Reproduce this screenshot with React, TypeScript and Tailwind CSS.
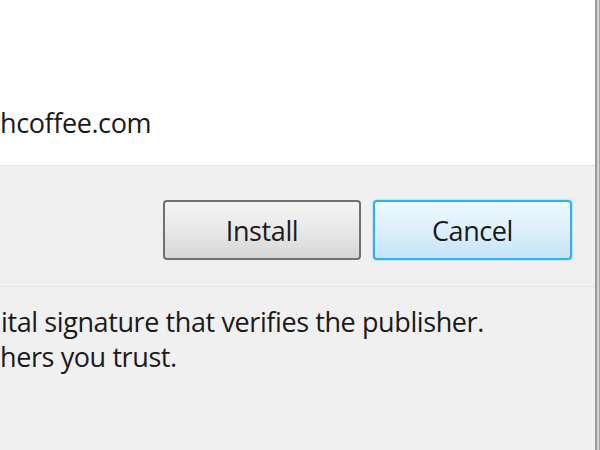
export default function App() {
  const font = { fontFamily: '"Open Sans", "Noto Sans", sans-serif' };

  return (
    <div
      className="w-[600px] h-[450px] flex overflow-hidden bg-[#f0f0f0] text-[#1a1a1a]"
      style={font}
    >
      <div className="flex-1 flex flex-col">
        {/* Details */}
        <div className="h-[165px] bg-white flex items-end pb-[29px]">
          <p className="text-[27px] leading-none tracking-[-0.4px]">hcoffee.com</p>
        </div>

        {/* Buttons */}
        <div className="h-[121px] border-t border-[#e2e2e2] flex items-center justify-end gap-[12px] pr-[23px] pt-[8px]">
          <button className="w-[198px] h-[60px] rounded-[4px] border-2 border-[#707070] bg-gradient-to-b from-[#f4f4f4] via-[#e8e8e8] to-[#d6d6d6] pt-[3px] text-[27px] tracking-[-0.4px]">
            Install
          </button>
          <button className="w-[199px] h-[60px] rounded-[4px] border-2 border-[#2fb2e6] bg-gradient-to-b from-[#eef8fe] via-[#dcf0fb] to-[#c4e4f6] pt-[3px] text-[27px] tracking-[-0.4px] shadow-[0_0_2px_#5cc8f0]">
            Cancel
          </button>
        </div>

        {/* Footer note */}
        <div className="flex-1 border-t border-[#e4e4e4] pt-[17px] text-[27px] leading-[35px] tracking-[-0.4px]">
          <p className="ml-[1px]">ital signature that verifies the publisher.</p>
          <p>hers you trust.</p>
        </div>
      </div>

      {/* Window edge */}
      <div className="w-[5px] border-l-2 border-[#9a9a9a] bg-[#d2d2d2] border-r border-r-[#a8a8a8]" />
    </div>
  );
}
